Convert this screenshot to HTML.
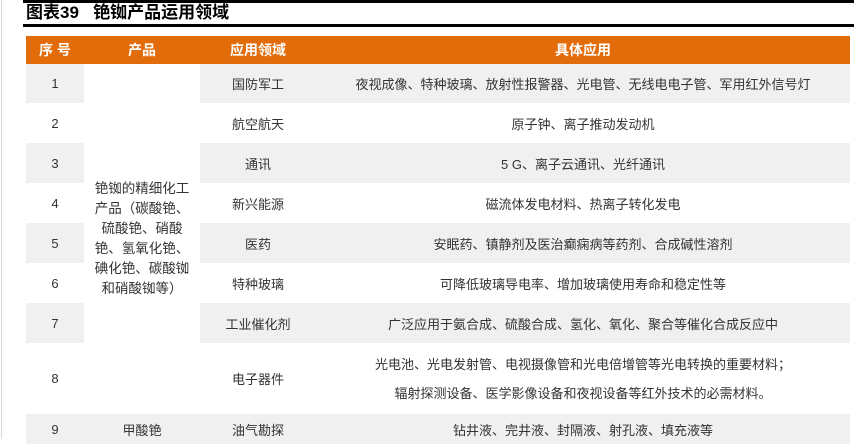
<!DOCTYPE html>
<html><head><meta charset="utf-8"><style>
body{margin:0;width:859px;height:439px;overflow:hidden;background:#fff;position:relative;font-family:"Liberation Sans","Noto Sans CJK SC",sans-serif;color:#333;font-size:13px}
.a{position:absolute}
.c{position:absolute;display:flex;align-items:center;justify-content:center;text-align:center}
.g{background:#f0f0f0}
.h{background:#e36c0a;color:#fff;font-weight:bold;font-size:14px}
</style></head><body>
<div class="a" style="left:1px;top:0;width:1px;height:439px;background:#d8d8d8"></div>
<div class="a" style="left:23px;top:0;width:831px;height:3px;background:#000"></div>
<div class="a" style="left:23px;top:24px;width:831px;height:3px;background:#000"></div>
<div class="a" style="left:26px;top:3px;font-weight:bold;font-size:17px;color:#000;line-height:20px">图表39&nbsp;&nbsp;&nbsp;铯铷产品运用领域</div>

<div class="c h" style="left:26px;top:36px;width:58px;height:28px">序 号</div>
<div class="c h" style="left:84px;top:36px;width:116px;height:28px">产品</div>
<div class="c h" style="left:200px;top:36px;width:116px;height:28px">应用领域</div>
<div class="c h" style="left:316px;top:36px;width:534px;height:28px">具体应用</div>

<div class="c g" style="left:26px;top:64px;width:58px;height:39px">1</div>
<div class="c g" style="left:200px;top:64px;width:116px;height:39px">国防军工</div>
<div class="c g" style="left:316px;top:64px;width:534px;height:39px">夜视成像、特种玻璃、放射性报警器、光电管、无线电电子管、军用红外信号灯</div>

<div class="c" style="left:26px;top:103px;width:58px;height:40px">2</div>
<div class="c" style="left:200px;top:103px;width:116px;height:40px">航空航天</div>
<div class="c" style="left:316px;top:103px;width:534px;height:40px">原子钟、离子推动发动机</div>

<div class="c g" style="left:26px;top:143px;width:58px;height:40px">3</div>
<div class="c g" style="left:200px;top:143px;width:116px;height:40px">通讯</div>
<div class="c g" style="left:316px;top:143px;width:534px;height:40px">5 G、离子云通讯、光纤通讯</div>

<div class="c" style="left:26px;top:183px;width:58px;height:40px">4</div>
<div class="c" style="left:200px;top:183px;width:116px;height:40px">新兴能源</div>
<div class="c" style="left:316px;top:183px;width:534px;height:40px">磁流体发电材料、热离子转化发电</div>

<div class="c g" style="left:26px;top:223px;width:58px;height:40px">5</div>
<div class="c g" style="left:200px;top:223px;width:116px;height:40px">医药</div>
<div class="c g" style="left:316px;top:223px;width:534px;height:40px">安眠药、镇静剂及医治癫痫病等药剂、合成碱性溶剂</div>

<div class="c" style="left:26px;top:263px;width:58px;height:40px">6</div>
<div class="c" style="left:200px;top:263px;width:116px;height:40px">特种玻璃</div>
<div class="c" style="left:316px;top:263px;width:534px;height:40px">可降低玻璃导电率、增加玻璃使用寿命和稳定性等</div>

<div class="c g" style="left:26px;top:303px;width:58px;height:40px">7</div>
<div class="c g" style="left:200px;top:303px;width:116px;height:40px">工业催化剂</div>
<div class="c g" style="left:316px;top:303px;width:534px;height:40px">广泛应用于氨合成、硫酸合成、氢化、氧化、聚合等催化合成反应中</div>

<div class="c" style="left:26px;top:343px;width:58px;height:71px">8</div>
<div class="c" style="left:200px;top:343px;width:116px;height:71px">电子器件</div>
<div class="c" style="left:316px;top:343px;width:534px;height:71px;line-height:29px">光电池、光电发射管、电视摄像管和光电倍增管等光电转换的重要材料；<br>辐射探测设备、医学影像设备和夜视设备等红外技术的必需材料。</div>

<div class="c" style="left:84px;top:64px;width:116px;height:350px;line-height:20px;font-size:13.5px">铯铷的精细化工<br>产品（碳酸铯、<br>硫酸铯、硝酸<br>铯、氢氧化铯、<br>碘化铯、碳酸铷<br>和硝酸铷等）</div>

<div class="c g" style="left:26px;top:414px;width:58px;height:30px">9</div>
<div class="c g" style="left:84px;top:414px;width:116px;height:30px">甲酸铯</div>
<div class="c g" style="left:200px;top:414px;width:116px;height:30px">油气勘探</div>
<div class="c g" style="left:316px;top:414px;width:534px;height:30px">钻井液、完井液、封隔液、射孔液、填充液等</div>
</body></html>
